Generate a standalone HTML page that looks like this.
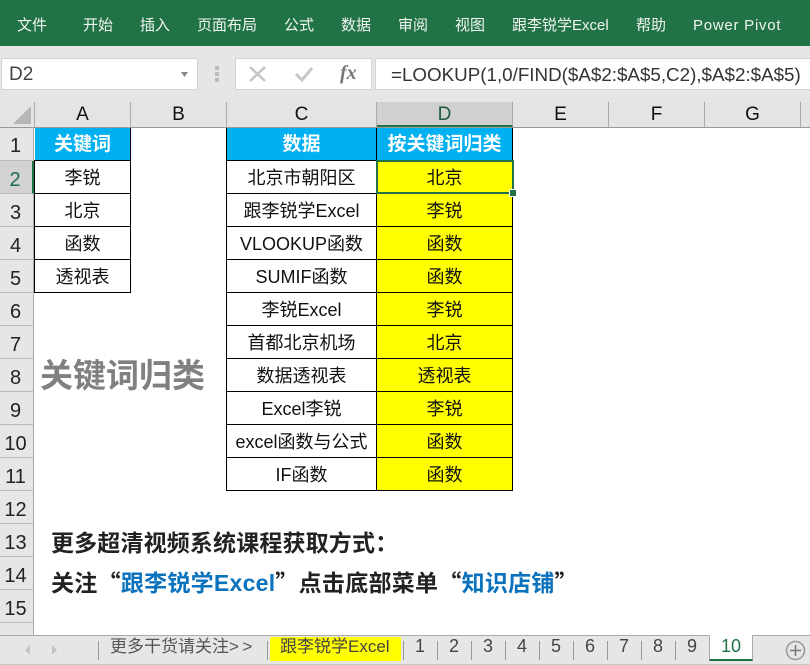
<!DOCTYPE html>
<html lang="zh-CN"><head><meta charset="utf-8"><title>关键词归类</title>
<style>
html,body{margin:0;padding:0;background:#fff}
#p{position:relative;width:810px;height:665px;overflow:hidden;background:#fff;font-family:"Liberation Sans","Noto Sans CJK SC",sans-serif;color:#111}
#p div{position:absolute;box-sizing:border-box;white-space:nowrap}
.m{top:0;height:46px;line-height:52px;color:#f0f5f2;font-size:15px}
.ch{top:102px;height:25px;line-height:26px;text-align:center;font-size:19px;background:#e4e4e4;border-right:1px solid #aaa;color:#111;font-family:"Liberation Sans",sans-serif}
.rh{left:0;width:34px;height:33px;background:#e6e6e6;border-bottom:1px solid #bbb;border-right:1px solid #aaa;text-align:center;font-size:20px;line-height:38px;color:#222;padding-right:2px}
.c{height:34px;line-height:34px;text-align:center;font-size:18px;border:1px solid #000;color:#111}
.a{left:34px;width:97px}.cc{left:226px;width:151px}.d{left:376px;width:137px;background:#ff0}
.h{background:#00b0f0;color:#fff;font-weight:700;font-size:19px}
.t{top:634px;font-size:18px;line-height:24px;color:#444;text-align:center}
.s{top:641px;width:1px;height:19px;background:#999}
.b{font-weight:700;font-size:23px;color:#222}
.b span{color:#0b72bd}
.b i{font-style:normal;font-family:"Noto Sans CJK SC",sans-serif;color:#222}
</style></head><body><div id="p">
<div style="left:0;top:0;width:810px;height:46px;background:#217346"></div>
<div class="m" style="left:17px">文件</div>
<div class="m" style="left:83px">开始</div>
<div class="m" style="left:140px">插入</div>
<div class="m" style="left:197px">页面布局</div>
<div class="m" style="left:284px">公式</div>
<div class="m" style="left:341px">数据</div>
<div class="m" style="left:398px">审阅</div>
<div class="m" style="left:455px">视图</div>
<div class="m" style="left:512px">跟李锐学Excel</div>
<div class="m" style="left:636px">帮助</div>
<div class="m" style="left:693px;letter-spacing:.75px">Power Pivot</div>

<div style="left:0;top:46px;width:810px;height:56px;background:#e6e6e6"></div>
<div style="left:1px;top:58px;width:197px;height:32px;background:#fff;border:1px solid #d4d4d4;font-size:19px;line-height:31px;padding-left:7px;color:#444">D2</div>
<svg style="position:absolute;left:180px;top:71px" width="10" height="7"><path d="M1 1h7L4.500 6z" fill="#888"/></svg>
<div style="left:215px;top:66px;width:4px;height:4px;background:#bbb"></div>
<div style="left:215px;top:72px;width:4px;height:4px;background:#bbb"></div>
<div style="left:215px;top:78px;width:4px;height:4px;background:#bbb"></div>
<div style="left:235px;top:58px;width:137px;height:32px;background:#fff;border:1px solid #d4d4d4"></div>
<svg style="position:absolute;left:248px;top:65px" width="20" height="18"><path d="M2 2 17 16M17 2 2 16" stroke="#c4c4c4" stroke-width="2.500" fill="none"/></svg>
<svg style="position:absolute;left:294px;top:66px" width="20" height="17"><path d="M2 8l6 6L18 2" stroke="#c8c8c8" stroke-width="3" fill="none"/></svg>
<div style="left:340px;top:58px;width:20px;height:30px;font:italic 700 20px/31px 'Liberation Serif',serif;color:#777">fx</div>
<div style="left:375px;top:58px;width:435px;height:32px;background:#fff;border:1px solid #d4d4d4;border-right:0;font-size:18.800px;line-height:31px;padding-left:15px;color:#333">=LOOKUP(1,0/FIND($A$2:$A$5,C2),$A$2:$A$5)</div>

<div style="left:0;top:102px;width:810px;height:26px;background:#e4e4e4;border-bottom:1px solid #999"></div>
<div style="left:0;top:102px;width:35px;height:25px;border-right:1px solid #aaa"></div>
<svg style="position:absolute;left:13px;top:106px" width="19" height="19"><path d="M18 0V18H0z" fill="#b6b6b6"/></svg>
<div class="ch" style="left:35px;width:96px">A</div>
<div class="ch" style="left:131px;width:96px">B</div>
<div class="ch" style="left:227px;width:150px">C</div>
<div class="ch" style="left:377px;width:136px;background:#d0d0d0;color:#1f5c3d;border-bottom:2px solid #217346">D</div>
<div class="ch" style="left:513px;width:96px">E</div>
<div class="ch" style="left:609px;width:96px">F</div>
<div class="ch" style="left:705px;width:96px">G</div>
<div class="ch" style="left:801px;width:9px;border:0"></div>

<div class="rh" style="top:128px;height:33px;line-height:36px">1</div>
<div class="rh" style="top:161px;background:#d2d2d2;color:#1f6b45;border-right:2px solid #217346">2</div>
<div class="rh" style="top:194px">3</div>
<div class="rh" style="top:227px">4</div>
<div class="rh" style="top:260px">5</div>
<div class="rh" style="top:293px">6</div>
<div class="rh" style="top:326px">7</div>
<div class="rh" style="top:359px">8</div>
<div class="rh" style="top:392px">9</div>
<div class="rh" style="top:425px">10</div>
<div class="rh" style="top:458px">11</div>
<div class="rh" style="top:491px">12</div>
<div class="rh" style="top:524px">13</div>
<div class="rh" style="top:557px">14</div>
<div class="rh" style="top:590px">15</div>
<div class="rh" style="top:623px;border-bottom:0;height:12px"></div>

<div class="c a h" style="top:128px;height:33px;border:0;border-bottom:1px solid #000;border-right:1px solid #000;left:35px;width:96px">关键词</div>
<div class="c a" style="top:160px">李锐</div>
<div class="c a" style="top:193px">北京</div>
<div class="c a" style="top:226px">函数</div>
<div class="c a" style="top:259px">透视表</div>

<div class="c cc h" style="top:128px;height:33px;border-top:0">数据</div>
<div class="c d h" style="top:128px;height:33px;border-top:0;border-left:1px solid #000">按关键词归类</div>
<div class="c cc" style="top:160px">北京市朝阳区</div><div class="c d" style="top:160px">北京</div>
<div class="c cc" style="top:193px">跟李锐学Excel</div><div class="c d" style="top:193px">李锐</div>
<div class="c cc" style="top:226px">VLOOKUP函数</div><div class="c d" style="top:226px">函数</div>
<div class="c cc" style="top:259px">SUMIF函数</div><div class="c d" style="top:259px">函数</div>
<div class="c cc" style="top:292px">李锐Excel</div><div class="c d" style="top:292px">李锐</div>
<div class="c cc" style="top:325px">首都北京机场</div><div class="c d" style="top:325px">北京</div>
<div class="c cc" style="top:358px">数据透视表</div><div class="c d" style="top:358px">透视表</div>
<div class="c cc" style="top:391px">Excel李锐</div><div class="c d" style="top:391px">李锐</div>
<div class="c cc" style="top:424px">excel函数与公式</div><div class="c d" style="top:424px">函数</div>
<div class="c cc" style="top:457px">IF函数</div><div class="c d" style="top:457px">函数</div>

<div style="left:376px;top:160px;width:138px;height:34px;border:2px solid #217346"></div>
<div style="left:510px;top:190px;width:6px;height:6px;background:#217346;border:1px solid #fff;box-sizing:content-box;margin:-1px"></div>

<div style="left:40px;top:353px;font-size:33px;line-height:46px;font-weight:700;color:#808080">关键词归类</div>
<div class="b" style="left:51px;top:527px;line-height:32px;letter-spacing:.15px">更多超清视频系统课程获取方式：</div>
<div class="b" style="left:51px;top:565px;line-height:32px;letter-spacing:.27px">关注<i>“</i><span>跟李锐学Excel</span><i>”</i>点击底部菜单<i>“</i><span>知识店铺</span><i>”</i></div>

<div style="left:0;top:635px;width:810px;height:30px;background:#e6e6e6;border-top:1px solid #aaa;border-bottom:1px solid #c4c4c4"></div>
<svg style="position:absolute;left:22px;top:644px" width="40" height="12"><path d="M8 1 3 6l5 5zM30 1l5 5-5 5z" fill="#c4c4c4"/></svg>
<div class="s" style="left:98px"></div>
<div class="t" style="left:110px;top:635px;color:#555;font-size:17px">更多干货请关注<span style="letter-spacing:3.500px">&gt;&gt;</span></div>
<div class="s" style="left:267px"></div>
<div style="left:270px;top:637px;width:131px;height:24px;background:#ff0"></div>
<div class="t" style="left:280px;top:635px;color:#444;font-size:17px">跟李锐学Excel</div>
<div class="s" style="left:403px"></div>
<div class="t" style="left:415px">1</div><div class="s" style="left:437px"></div>
<div class="t" style="left:449px">2</div><div class="s" style="left:471px"></div>
<div class="t" style="left:483px">3</div><div class="s" style="left:505px"></div>
<div class="t" style="left:517px">4</div><div class="s" style="left:539px"></div>
<div class="t" style="left:551px">5</div><div class="s" style="left:573px"></div>
<div class="t" style="left:585px">6</div><div class="s" style="left:607px"></div>
<div class="t" style="left:619px">7</div><div class="s" style="left:641px"></div>
<div class="t" style="left:653px">8</div><div class="s" style="left:675px"></div>
<div class="t" style="left:687px">9</div>
<div style="left:709px;top:635px;width:44px;height:26px;background:#fff;border:1px solid #aaa;border-top:0;border-bottom:2px solid #217346"></div>
<div class="t" style="left:721px;color:#217346">10</div>
<svg style="position:absolute;left:785px;top:640px" width="21" height="21"><circle cx="10.500" cy="10.500" r="9" fill="none" stroke="#999" stroke-width="1.500"/><path d="M10.500 5v11M5 10.500h11" stroke="#777" stroke-width="1.500"/></svg>
</div></body></html>
